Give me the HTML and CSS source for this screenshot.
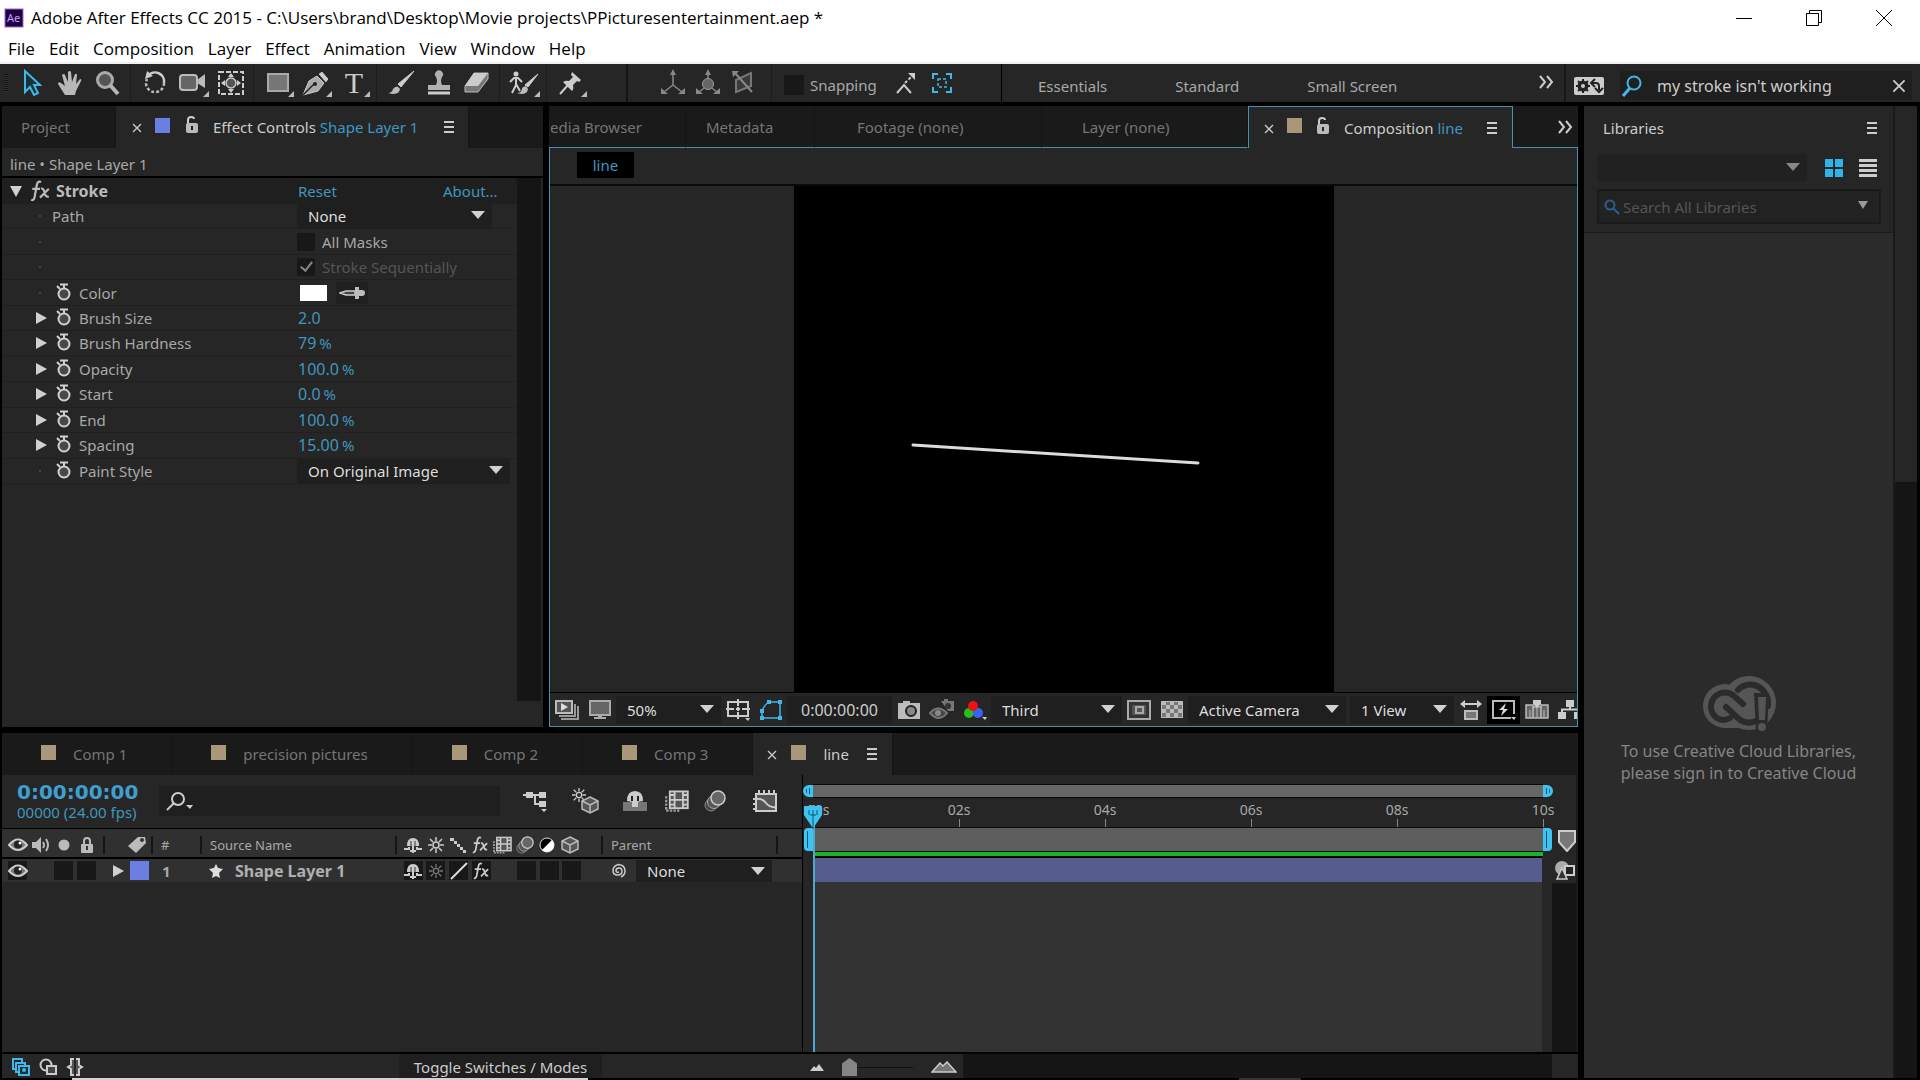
FILE: index.html
```html
<!DOCTYPE html>
<html lang="en">
<head>
  <meta charset="UTF-8">
  <meta name="viewport" content="width=device-width, initial-scale=1.0">
  <title>Adobe After Effects CC 2015</title>
  <link rel="stylesheet" href="styles.css">
</head>
<body>

  <!-- shared icons -->
  <svg class="sprite" aria-hidden="true">
    <symbol id="i-eye" viewBox="0 0 20 14"><path d="M1 7Q10-4 19 7Q10 17 1 7Z" fill="#777" stroke="#ccc" stroke-width="2"/><circle cx="10" cy="6.500" r="4" fill="#222"/><circle cx="12" cy="5" r="1.500" fill="#fff"/></symbol>
    <symbol id="i-lock-open" viewBox="0 0 14 18"><path d="M3 8V4q0-3 3-3q3 0 3 2" fill="none" stroke="#ccc" stroke-width="2"/><rect x="1" y="7" width="12" height="10" rx="2" fill="#bbb"/><path d="M7 10v4" stroke="#222" stroke-width="2"/></symbol>
    <symbol id="i-menu" viewBox="0 0 12 14"><path d="M1 2h10M1 7h10M1 12h10" stroke="#ccc" stroke-width="2"/></symbol>
    <symbol id="i-more" viewBox="0 0 16 14"><path d="M2 1l5 6-5 6M9 1l5 6-5 6" fill="none" stroke="#ccc" stroke-width="2"/></symbol>
    <symbol id="i-x" viewBox="0 0 10 10"><path d="M1 1l8 8M9 1l-8 8" stroke="currentColor" stroke-width="1.300"/></symbol>
    <symbol id="i-watch" viewBox="0 0 16 18"><circle cx="8" cy="11" r="5.500" fill="#484848" stroke="#d0d0d0" stroke-width="2"/><path d="M4 1.500h8M8 1v4M1 3l3 3" stroke="#d0d0d0" stroke-width="2"/></symbol>
    <symbol id="i-right" viewBox="0 0 11 12"><path d="M0 0l11 6-11 6z" fill="#d0d0d0"/></symbol>
    <symbol id="i-fx" viewBox="0 0 18 20"><path d="M10 2Q7 0 6 5L4 16Q3 19 1 18M2 8h7M10 8q2-1 3 3q1 5 4 4M17 8L9 16" fill="none" stroke="currentColor" stroke-width="2"/></symbol>
    <symbol id="i-shy" viewBox="0 0 18 16"><path d="M3 9Q3 1 9 1Q15 1 15 9Z" fill="#ccc"/><path d="M0 12h5v-2M18 12h-5v-2M9 5v11M6 14h6" fill="none" stroke="#ccc" stroke-width="2"/><path d="M7 4v5M11 4v5" stroke="#333"/></symbol>
    <symbol id="i-sun" viewBox="0 0 16 16"><circle cx="8" cy="8" r="3" fill="none" stroke="currentColor" stroke-width="1.500"/><path d="M8 0v4M8 12v4M0 8h4M12 8h4M2 2l3 3M11 11l3 3M14 2l-3 3M5 11l-3 3" stroke="currentColor" stroke-width="1.500"/></symbol>
    <symbol id="i-film" viewBox="0 0 20 18"><path d="M1 5v12h12" fill="none" stroke="#999" stroke-width="2" stroke-dasharray="2 1"/><rect x="4" y="1" width="15" height="14" fill="#555" stroke="#ccc" stroke-width="1.500"/><path d="M8 1v14M15 1v14M8 8h7M4 4h4M4 8h4M4 12h4M15 4h4M15 8h4M15 12h4" stroke="#ccc" stroke-width="1.500"/></symbol>
    <symbol id="i-blur" viewBox="0 0 22 22"><circle cx="7" cy="15" r="6" fill="#444" stroke="#888"/><circle cx="10" cy="12" r="6.500" fill="#555" stroke="#aaa"/><circle cx="14" cy="8" r="7" fill="#666" stroke="#ccc" stroke-width="1.500"/></symbol>
    <symbol id="i-cube" viewBox="0 0 18 18"><path d="M9 1l8 4v8l-8 4-8-4V5z" fill="#555" stroke="#bbb" stroke-width="1.500"/><path d="M1 5l8 4 8-4M9 9v8" fill="none" stroke="#bbb" stroke-width="1.500"/></symbol>
    <symbol id="i-tick" viewBox="0 0 6 6"><path d="M6 0v6H0z" fill="#bbb"/></symbol>
  </svg>

  <header class="titlebar">
    <svg class="ae-logo" width="20" height="20" viewBox="0 0 20 20"><rect x="1" y="1" width="18" height="18" fill="#1f0040" stroke="#9a6bd0"/><text x="3" y="14" font-size="11" font-family="Noto Sans" fill="#c9a0ff">Ae</text></svg>
    <h1>Adobe After Effects CC 2015 - C:\Users\brand\Desktop\Movie projects\PPicturesentertainment.aep *</h1>
    <div class="win-buttons">
      <button aria-label="Minimize"><svg width="16" height="16" viewBox="0 0 16 16"><path d="M0 8.500h16" stroke="#000"/></svg></button>
      <button aria-label="Restore"><svg width="16" height="16" viewBox="0 0 16 16"><path d="M.5 3.500h12v12H.500zM3.500 3.500v-3h12v12h-3" fill="none" stroke="#000"/></svg></button>
      <button aria-label="Close"><svg width="16" height="16" viewBox="0 0 16 16"><path d="M0 0l16 16M16 0L0 16" stroke="#000"/></svg></button>
    </div>
  </header>

  <nav class="menubar">
    <button>File</button><button>Edit</button><button>Composition</button><button>Layer</button><button>Effect</button><button>Animation</button><button>View</button><button>Window</button><button>Help</button>
  </nav>

  <div class="toolbar">
    <span class="grip"></span>
    <div class="tools">
      <button aria-label="Selection"><svg width="20" height="28" viewBox="0 0 20 28"><path d="M3 2v21l5-5 4 8 4-2-4-8h6z" fill="#1b3038" stroke="#3fb8e8" stroke-width="2"/></svg></button>
      <button aria-label="Hand"><svg width="26" height="26" viewBox="0 0 26 26"><path d="M8 25L1 14q0-3 3-1l4 3L5 5q2-2 3 0l3 7V2q2-2 3 0l1 10 3-8q2-1 2 1l-1 9 4-5q2 0 1 2l-5 10-1 4z" fill="#b8b8b8"/></svg></button>
      <button aria-label="Zoom"><svg width="26" height="26" viewBox="0 0 26 26"><circle cx="10" cy="10" r="7.500" fill="#555" stroke="#aaa" stroke-width="3"/><path d="M15 15l8 9" stroke="#b5b5b5" stroke-width="4"/></svg></button>
    </div>
    <div class="tools">
      <button aria-label="Rotation"><svg width="24" height="26" viewBox="0 0 24 26"><path d="M5 6a9 9 0 0 1 16 7" fill="none" stroke="#ccc" stroke-width="2.500"/><path d="M21 13a9 9 0 1 1-17-4" fill="none" stroke="#bbb" stroke-width="2.500" stroke-dasharray="3 2"/><path d="M2 9l2-8 6 5z" fill="#ccc"/></svg></button>
      <button aria-label="Camera"><svg width="28" height="22" viewBox="0 0 28 22"><rect x="1" y="3" width="17" height="15" rx="3" fill="#666" stroke="#bbb" stroke-width="2"/><path d="M18 8l8-6v14l-8-5z" fill="#bbb"/></svg><svg class="corner"><use href="#i-tick"/></svg></button>
      <button aria-label="Pan Behind"><svg width="26" height="24" viewBox="0 0 26 24"><rect x="1" y="1" width="24" height="22" fill="none" stroke="#ccc" stroke-width="2" stroke-dasharray="5 2"/><circle cx="13" cy="12" r="5" fill="#555" stroke="#ccc" stroke-width="1.500"/><path d="M13 2l3 4h-6zM13 22l3-4h-6zM3 12l4-3v6zM23 12l-4-3v6z" fill="#ccc"/></svg></button>
    </div>
    <div class="tools">
      <button aria-label="Rectangle"><svg width="22" height="22" viewBox="0 0 22 22"><rect x="1" y="2" width="20" height="17" fill="#777" stroke="#aaa" stroke-width="2"/></svg><svg class="corner"><use href="#i-tick"/></svg></button>
      <button aria-label="Pen"><svg width="28" height="26" viewBox="0 0 28 26"><path d="M1 25L7 11l8-5 7 7-6 8z" fill="#aaa" stroke="#ccc"/><path d="M1 25l11-11" stroke="#222" stroke-width="1.500"/><circle cx="13" cy="14" r="2" fill="#222"/><path d="M16 4l4-3 7 8-3 4z" fill="#ccc" stroke="#222"/></svg><svg class="corner"><use href="#i-tick"/></svg></button>
      <button class="type-tool" aria-label="Type">T<svg class="corner"><use href="#i-tick"/></svg></button>
    </div>
    <div class="tools">
      <button aria-label="Brush"><svg width="28" height="26" viewBox="0 0 28 26"><path d="M27 1L14 17l-3-3z" fill="#ccc" stroke="#ccc"/><path d="M1 23q4 0 5-4 4-5 7 0-1 7-12 4z" fill="#bbb"/></svg></button>
      <button aria-label="Clone Stamp"><svg width="24" height="26" viewBox="0 0 24 26"><path d="M9 15q2-4 0-8a4 4 0 1 1 6 0q-2 4 0 8h8v5H1v-5z" fill="#b0b0b0"/><path d="M1 23h22" stroke="#ccc" stroke-width="3"/></svg></button>
      <button aria-label="Eraser"><svg width="26" height="22" viewBox="0 0 26 22"><path d="M10 1h14v6l-10 13H1v-6z" fill="#777" stroke="#bbb"/><path d="M10 1h14L14 14H1z" fill="#ccc"/></svg></button>
    </div>
    <div class="tools">
      <button aria-label="Roto Brush"><svg width="30" height="26" viewBox="0 0 30 26"><circle cx="7" cy="4" r="2.500" fill="#ccc"/><path d="M1 12l4-4h4l4 4M7 8v7l-4 8M7 14l4 7" fill="none" stroke="#ccc" stroke-width="2"/><path d="M29 4L19 17l-3-2z" stroke="#ccc" fill="#ccc"/><path d="M8 23q5 0 5-5 4-4 6 1-1 7-11 4z" fill="#bbb"/></svg><svg class="corner"><use href="#i-tick"/></svg></button>
    </div>
    <div class="tools last">
      <button aria-label="Puppet Pin"><svg width="26" height="26" viewBox="0 0 26 26"><path d="M14 2l9 8-2 2-2-1-4 4q1 4-1 6L5 12q3-2 6-1l4-4-2-2z" fill="#ccc"/><path d="M10 15L2 24" stroke="#ccc" stroke-width="2"/></svg><svg class="corner"><use href="#i-tick"/></svg></button>
    </div>
    <div class="axis-tools">
      <button aria-label="Local Axis"><svg width="26" height="26" viewBox="0 0 26 26"><path d="M13 4v12l-9 7M13 16l9 7" fill="none" stroke="#888" stroke-width="1.500"/><path d="M13 0l3 6h-6zM1 19v6h7zM25 19v6h-7z" fill="#888"/></svg></button>
      <button aria-label="World Axis"><svg width="26" height="26" viewBox="0 0 26 26"><path d="M13 4v12l-9 7M13 16l9 7" fill="none" stroke="#888" stroke-width="1.500"/><circle cx="13" cy="15" r="5.500" fill="#666" stroke="#999"/><path d="M13 0l3 6h-6zM1 19v6h7zM25 19v6h-7z" fill="#888"/></svg></button>
      <button aria-label="View Axis"><svg width="26" height="26" viewBox="0 0 26 26"><path d="M6 11l15-7v13L6 23z" fill="#3a3a3a" stroke="#777" stroke-width="2"/><path d="M5 4l17 19" fill="none" stroke="#888" stroke-width="2"/><path d="M2 2h7l-6 6z" fill="#888"/></svg></button>
    </div>
    <div class="snapping">
      <input type="checkbox" id="snapping"><label for="snapping">Snapping</label>
      <button aria-label="Snap edges"><svg width="20" height="22" viewBox="0 0 20 22"><path d="M1 21l7-8 7 8" fill="none" stroke="#ccc" stroke-width="2"/><path d="M9 11l8-8" stroke="#ccc" stroke-width="2" stroke-dasharray="3 2"/><path d="M12 1h7v7z" fill="#ccc"/></svg></button>
      <button aria-label="Snap features"><svg width="20" height="20" viewBox="0 0 20 20"><path d="M1 6V1h5M14 1h5v5M19 14v5h-5M6 19H1v-5" fill="none" stroke="#3fb8e8" stroke-width="2"/><path d="M6 6h8v8H6z" fill="none" stroke="#3fb8e8" stroke-width="1.500" stroke-dasharray="3 2"/></svg></button>
    </div>
    <div class="workspaces">
      <button>Essentials</button><button>Standard</button><button>Small Screen</button>
      <button class="more" aria-label="More workspaces"><svg width="16" height="14"><use href="#i-more"/></svg></button>
    </div>
    <div class="help-search">
      <button aria-label="Sync settings"><svg width="30" height="18" viewBox="0 0 30 18"><rect width="30" height="18" rx="2" fill="#ccc"/><path d="M9 2v14M2 9h14M4 4l10 10M14 4L4 14" stroke="#222" stroke-width="2"/><circle cx="9" cy="9" r="4" fill="none" stroke="#222" stroke-width="3"/><circle cx="9" cy="9" r="2" fill="#ccc"/><path d="M18 6h4q3 0 3 3v4M21 2l-4 4 4 4M21 11l4 4 4-4" fill="none" stroke="#222" stroke-width="2"/></svg></button>
      <div class="search-field">
        <svg width="20" height="22" viewBox="0 0 20 22"><circle cx="12" cy="8" r="6.500" fill="none" stroke="#3fb8e8" stroke-width="2"/><path d="M8 13l-7 8" stroke="#3fb8e8" stroke-width="3"/></svg>
        <input type="text" value="my stroke isn't working" aria-label="Search Help">
        <button aria-label="Clear search"><svg width="14" height="14"><use href="#i-x"/></svg></button>
      </div>
    </div>
  </div>

  <main class="workspace">
    <div class="main-col">
      <div class="upper">

        <section class="panel effects">
          <div class="tabs">
            <button class="tab project">Project</button>
            <div class="tab active effect-tab">
              <button class="close" aria-label="Close"><svg width="10" height="10"><use href="#i-x"/></svg></button>
              <span class="swatch blue"></span>
              <svg width="14" height="18"><use href="#i-lock-open"/></svg>
              <span class="tab-name">Effect Controls <b>Shape Layer 1</b></span>
              <svg width="12" height="14"><use href="#i-menu"/></svg>
            </div>
          </div>
          <p class="crumb">line • Shape Layer 1</p>
          <div class="effect-body">
            <div class="effect-list">
              <div class="effect-head">
                <span class="down"></span>
                <svg class="fx" width="20" height="22"><use href="#i-fx"/></svg>
                <strong>Stroke</strong>
                <a href="#">Reset</a>
                <a href="#" class="about">About...</a>
              </div>
              <div class="props">
                <div class="prop"><i class="dot"></i><label class="plain" for="path">Path</label><span class="drop path-drop"><select id="path"><option>None</option></select></span></div>
                <div class="prop"><i class="dot"></i><span class="check"><input type="checkbox" id="masks"><label for="masks">All Masks</label></span></div>
                <div class="prop"><i class="dot"></i><span class="check"><input type="checkbox" id="seq" checked disabled><label for="seq">Stroke Sequentially</label></span></div>
                <div class="prop"><i class="dot"></i><svg class="watch"><use href="#i-watch"/></svg><span class="name">Color</span><span class="color-field"><button class="color-well" aria-label="Color"></button><button class="dropper" aria-label="Eyedropper"><svg width="26" height="12" viewBox="0 0 26 12"><path d="M1 6l6-2h9v4H7z" fill="#444" stroke="#ccc" stroke-width="1.500"/><path d="M16 0h4v3h3q3 0 3 3t-3 3h-3v3h-4z" fill="#bbb"/></svg></button></span></div>
                <div class="prop"><svg class="arrow"><use href="#i-right"/></svg><svg class="watch"><use href="#i-watch"/></svg><span class="name">Brush Size</span><button class="value">2.0</button></div>
                <div class="prop"><svg class="arrow"><use href="#i-right"/></svg><svg class="watch"><use href="#i-watch"/></svg><span class="name">Brush Hardness</span><button class="value">79<span>%</span></button></div>
                <div class="prop"><svg class="arrow"><use href="#i-right"/></svg><svg class="watch"><use href="#i-watch"/></svg><span class="name">Opacity</span><button class="value">100.0<span>%</span></button></div>
                <div class="prop"><svg class="arrow"><use href="#i-right"/></svg><svg class="watch"><use href="#i-watch"/></svg><span class="name">Start</span><button class="value">0.0<span>%</span></button></div>
                <div class="prop"><svg class="arrow"><use href="#i-right"/></svg><svg class="watch"><use href="#i-watch"/></svg><span class="name">End</span><button class="value">100.0<span>%</span></button></div>
                <div class="prop"><svg class="arrow"><use href="#i-right"/></svg><svg class="watch"><use href="#i-watch"/></svg><span class="name">Spacing</span><button class="value">15.00<span>%</span></button></div>
                <div class="prop"><i class="dot"></i><svg class="watch"><use href="#i-watch"/></svg><label class="name" for="paint">Paint Style</label><span class="drop paint-drop"><select id="paint"><option>On Original Image</option></select></span></div>
              </div>
            </div>
            <div class="scroll-track"></div>
          </div>
        </section>

        <section class="panel viewer">
          <div class="tabs">
            <button class="tab media">Media Browser</button>
            <button class="tab metadata">Metadata</button>
            <button class="tab footage">Footage (none)</button>
            <button class="tab layer-tab">Layer (none)</button>
            <div class="tab active comp-tab">
              <button class="close" aria-label="Close"><svg width="10" height="10"><use href="#i-x"/></svg></button>
              <span class="swatch"></span>
              <svg width="14" height="18"><use href="#i-lock-open"/></svg>
              <span class="tab-name">Composition <b>line</b></span>
              <svg width="12" height="14"><use href="#i-menu"/></svg>
            </div>
            <div class="tab-rest"><button aria-label="More tabs"><svg width="16" height="14"><use href="#i-more"/></svg></button></div>
          </div>
          <div class="viewer-body">
            <div class="comp-nav"><button>line</button></div>
            <div class="stage">
              <svg class="canvas" viewBox="0 0 540 506" preserveAspectRatio="xMidYMin slice"><rect width="540" height="506" fill="#000"/><path d="M119 259L404 277" stroke="#dcdcd8" stroke-width="3" stroke-linecap="round"/></svg>
            </div>
            <div class="view-bar">
              <button class="ic" aria-label="Always preview"><svg width="24" height="22" viewBox="0 0 24 22"><path d="M6 20h17V7M4 17h16V5" fill="none" stroke="#999" stroke-width="2"/><rect x="1" y="2" width="16" height="12" fill="#555" stroke="#bbb" stroke-width="2"/><path d="M6 4l7 4-7 4z" fill="#ddd"/></svg></button>
              <button class="ic" aria-label="Main viewer"><svg width="22" height="20" viewBox="0 0 22 20"><rect x="1" y="1" width="20" height="14" fill="#666" stroke="#aaa" stroke-width="2"/><path d="M9 15h4v2h4v2H5v-2h4z" fill="#aaa"/></svg></button>
              <span class="drop zoom-drop"><select aria-label="Magnification"><option>50%</option></select></span>
              <button class="ic" aria-label="Guides"><svg width="24" height="22" viewBox="0 0 24 22"><rect x="2" y="3" width="20" height="14" fill="none" stroke="#ccc" stroke-width="2"/><path d="M12 0v7M12 13v7M0 10h8M16 10h8M10 10h4M12 8v4" stroke="#ccc" stroke-width="2"/><path d="M19 19h5l-2 3z" fill="#ccc"/></svg></button>
              <button class="ic" aria-label="Mask visibility"><svg width="24" height="22" viewBox="0 0 24 22"><path d="M3 19V13Q4 7 10 3H21V19Z" fill="none" stroke="#3fb8e8" stroke-width="1.500"/><path d="M1 17h4v4H1zM19 17h4v4h-4zM19 1h4v4h-4zM8 1h4v4H8zM1 10h4v4H1z" fill="#3fb8e8"/></svg></button>
              <button class="time-box">0:00:00:00</button>
              <button class="ic" aria-label="Snapshot"><svg width="24" height="20" viewBox="0 0 24 20"><path d="M1 3h5V1h7v2h10v16H1z" fill="#bbb"/><circle cx="14" cy="11" r="5" fill="#888" stroke="#222" stroke-width="2"/></svg></button>
              <button class="ic" aria-label="Show snapshot"><svg width="26" height="24" viewBox="0 0 26 24"><path d="M1 15q8-9 17 0q-8 10-17 0z" fill="#444" stroke="#777" stroke-width="2"/><circle cx="9" cy="15" r="3" fill="#888"/><path d="M12 3h3V1h4v2h6v10h-6" fill="#777"/><circle cx="19" cy="8" r="3" fill="#333"/></svg></button>
              <button class="ic" aria-label="Channels"><svg width="24" height="20" viewBox="0 0 24 20"><circle cx="6" cy="13" r="5" fill="#1fc01f"/><circle cx="15" cy="13" r="5" fill="#3b62f5"/><circle cx="10" cy="6" r="5" fill="#f01010"/><path d="M19 17h5l-2 3z" fill="#ccc"/></svg></button>
              <span class="drop res-drop"><select aria-label="Resolution"><option>Third</option></select></span>
              <button class="ic" aria-label="Region of interest"><svg width="24" height="20" viewBox="0 0 24 20"><rect x="1" y="1" width="22" height="18" fill="#333" stroke="#aaa" stroke-width="2"/><path d="M5 5h14v10H5z" fill="#555"/><rect x="9" y="7" width="7" height="6" fill="#555" stroke="#aaa" stroke-width="2"/></svg></button>
              <button class="ic" aria-label="Transparency grid"><svg width="24" height="20" viewBox="0 0 24 20"><rect x="1" y="1" width="22" height="17" fill="#bbb"/><path d="M2 5h4v4H2zM6 2h4v3H6zM14 2h4v3h-4zM10 5h4v4h-4zM18 5h4v4h-4zM6 9h4v4H6zM14 9h4v4h-4zM2 13h4v4H2zM10 13h4v4h-4zM18 13h4v4h-4z" fill="#777"/></svg></button>
              <span class="drop cam-drop"><select aria-label="3D view"><option>Active Camera</option></select></span>
              <span class="drop view-drop"><select aria-label="View layout"><option>1 View</option></select></span>
              <button class="ic" aria-label="Pixel aspect"><svg width="22" height="20" viewBox="0 0 22 20"><path d="M4 4h14" stroke="#ccc" stroke-width="2"/><path d="M5 0v8L0 4zM17 0v8l5-4z" fill="#ccc"/><rect x="5" y="11" width="12" height="8" fill="#777" stroke="#bbb" stroke-width="2"/></svg></button>
              <button class="ic on" aria-label="Fast previews"><svg width="24" height="20" viewBox="0 0 24 20"><path d="M19 18H1V1h21v13" fill="none" stroke="#bbb" stroke-width="2"/><path d="M14 3l-7 7h4l-2 6 7-7h-4z" fill="#ddd"/><path d="M19 17h5l-2 3z" fill="#ccc"/></svg></button>
              <button class="ic" aria-label="Timeline"><svg width="24" height="20" viewBox="0 0 24 20"><path d="M1 5h7v13H1zM16 5h7v13h-7zM8 7h8v11H8z" fill="#666" stroke="#bbb" stroke-width="1.500"/><path d="M12 8v10M5 10v8M19 10v8" stroke="#bbb"/><path d="M8 0h8v4l-4 4-4-4z" fill="#ccc"/></svg></button>
              <button class="ic" aria-label="Flowchart"><svg width="24" height="20" viewBox="0 0 24 20"><path d="M8 0h8v7H8zM0 12h8v7H0zM16 12h8v7h-8z" fill="#ccc"/><path d="M12 7v3M4 13V9.500h16V13" fill="none" stroke="#ccc" stroke-width="2"/></svg></button>
            </div>
          </div>
        </section>
      </div>

      <section class="panel timeline">
        <div class="tabs">
          <button class="tab comp"><span class="swatch"></span>Comp 1</button>
          <button class="tab comp"><span class="swatch"></span>precision pictures</button>
          <button class="tab comp"><span class="swatch"></span>Comp 2</button>
          <button class="tab comp"><span class="swatch"></span>Comp 3</button>
          <div class="tab active line-tab">
            <button class="close" aria-label="Close"><svg width="10" height="10"><use href="#i-x"/></svg></button>
            <span class="swatch"></span>
            <span class="tab-name">line</span>
            <svg width="12" height="14"><use href="#i-menu"/></svg>
          </div>
        </div>

        <div class="timeline-body">
          <div class="layers">
            <div class="layers-head">
              <button class="timecode">0:00:00:00<small>00000 (24.00 fps)</small></button>
              <label class="layer-search">
                <svg width="28" height="20" viewBox="0 0 28 20"><circle cx="12" cy="8" r="6" fill="none" stroke="#ccc" stroke-width="2"/><path d="M8 12l-7 7" stroke="#ccc" stroke-width="2"/><path d="M20 14h7l-3 4z" fill="#ccc"/></svg>
                <input type="text" aria-label="Search layers">
              </label>
              <div class="layer-tools">
                <button aria-label="Mini flowchart"><svg width="26" height="22" viewBox="0 0 26 22"><path d="M1 5h20M13 5v9h5" fill="none" stroke="#ccc" stroke-width="2"/><path d="M4 2h7v6H4zM17 2h7v6h-7zM17 11h7v6h-7zM19 19h6l-3 3z" fill="#ccc"/></svg></button>
                <button aria-label="Draft 3D"><svg width="28" height="26" viewBox="0 0 28 26"><svg width="14" height="14" color="#ccc"><use href="#i-sun"/></svg><svg x="9" y="8" width="18" height="18"><use href="#i-cube"/></svg></svg></button>
                <button aria-label="Hide shy layers"><svg width="26" height="22" viewBox="0 0 26 22"><path d="M1 12h24v9H1z" fill="#777"/><path d="M5 11Q5 1 13 1Q21 1 21 11L16 12V17H10V12z" fill="#ccc"/><path d="M10 6v5M16 6v5" stroke="#222" stroke-width="2"/></svg></button>
                <button aria-label="Frame blending"><svg width="24" height="22"><use href="#i-film"/></svg></button>
                <button aria-label="Motion blur"><svg width="22" height="22"><use href="#i-blur"/></svg></button>
                <button aria-label="Graph editor"><svg width="24" height="22" viewBox="0 0 24 22"><rect x="3" y="4" width="20" height="17" fill="#555" stroke="#ccc" stroke-width="2"/><path d="M3 9q6-1 10 4t10 4" fill="none" stroke="#ccc" stroke-width="2"/><path d="M6 0v4M11 0v4M16 0v4M21 0v4M0 9h3M0 14h3M0 19h3" stroke="#ccc" stroke-width="2"/></svg></button>
              </div>
            </div>
            <table class="layer-table">
              <colgroup><col class="c-av"><col class="c-label"><col class="c-num"><col class="c-name"><col class="c-switches"><col class="c-parent"><col></colgroup>
              <thead>
                <tr>
                  <th><div class="cell av"><svg width="20" height="14"><use href="#i-eye"/></svg><svg width="18" height="16" viewBox="0 0 18 16"><path d="M0 5h4l5-5v16l-5-5H0z" fill="#bbb"/><path d="M11 5q2 3 0 6M14 2q4 6 0 12" fill="none" stroke="#bbb" stroke-width="2"/></svg><svg width="12" height="12" viewBox="0 0 12 12"><circle cx="6" cy="6" r="5.500" fill="#bbb"/></svg><svg width="12" height="16" viewBox="0 0 12 16"><path d="M3 8V4q0-3 3-3t3 3v4" fill="none" stroke="#bbb" stroke-width="2"/><rect y="7" width="12" height="9" rx="1" fill="#bbb"/><path d="M6 9v4" stroke="#333" stroke-width="2"/></svg></div></th>
                  <th><div class="cell end"><svg width="20" height="18" viewBox="0 0 20 18"><path d="M1 10L11 1h7l1 6-10 10z" fill="#bbb"/><circle cx="15" cy="4" r="2" fill="#333"/></svg></div></th>
                  <th><div class="cell num">#</div></th>
                  <th><div class="cell">Source Name</div></th>
                  <th><div class="cell switches"><svg width="18" height="16"><use href="#i-shy"/></svg><svg width="16" height="16"><use href="#i-sun"/></svg><svg width="16" height="16" viewBox="0 0 16 16"><path d="M0 1h4v3H0zM4 4h3v3H4zM7 7h3v3H7zM10 10h3v3h-3zM13 13h3v3h-3z" fill="#ccc"/></svg><svg width="16" height="18"><use href="#i-fx"/></svg><svg width="19" height="18"><use href="#i-film"/></svg><svg width="18" height="18"><use href="#i-blur"/></svg><svg width="16" height="16" viewBox="0 0 16 16"><circle cx="8" cy="8" r="7" fill="#000" stroke="#ddd"/><path d="M13 3A7 7 0 0 1 3 13z" fill="#fff"/></svg><svg width="18" height="18"><use href="#i-cube"/></svg></div></th>
                  <th><div class="cell">Parent</div></th>
                  <th></th>
                </tr>
              </thead>
              <tbody>
                <tr>
                  <td><div class="row av"><span class="box"><svg width="20" height="14"><use href="#i-eye"/></svg></span><span></span><span class="box"></span><span class="box"></span></div></td>
                  <td><div class="row label"><svg class="arrow"><use href="#i-right"/></svg><span class="layer-color"></span></div></td>
                  <td class="index">1</td>
                  <td><div class="row source"><svg width="14" height="14" viewBox="0 0 14 14"><path d="M7 0l2 4 5 1-4 4 1 5-4-2-4 2 1-5-4-4 5-1z" fill="#ddd"/></svg>Shape Layer 1</div></td>
                  <td><div class="row switches"><span class="box"><svg width="18" height="16"><use href="#i-shy"/></svg></span><span class="box dim"><svg width="14" height="14"><use href="#i-sun"/></svg></span><span class="box"><svg width="18" height="18" viewBox="0 0 18 18"><path d="M1 17L17 1" stroke="#ddd" stroke-width="2"/></svg></span><span class="box"><svg width="16" height="18"><use href="#i-fx"/></svg></span><span></span><span class="box"></span><span class="box"></span><span class="box"></span></div></td>
                  <td><div class="row parent"><svg width="16" height="16" viewBox="0 0 16 16"><path d="M9 9Q6 10 6 7.500T9 5q3 0 3 3.500T7.500 12Q3 12 3 7.500T8.500 1.500Q15 2 15 8q0 4-4 6" fill="none" stroke="#ccc" stroke-width="1.500"/></svg><span class="drop parent-drop"><select aria-label="Parent"><option>None</option></select></span></div></td>
                  <td></td>
                </tr>
              </tbody>
            </table>
          </div>

          <div class="time-pane">
            <div class="tracks">
              <div class="nav-bar"><span class="handle left"></span><span class="handle right"></span></div>
              <div class="ruler">
                <span class="mark first">:00s</span><span class="mark">02s</span><span class="mark">04s</span><span class="mark">06s</span><span class="mark">08s</span><span class="mark">10s</span>
              </div>
              <div class="work-bar"><span class="handle left"></span><span class="handle right"></span></div>
              <div class="cache"></div>
              <div class="track-area"><div class="layer-bar"></div></div>
              <div class="playhead"><svg width="20" height="24" viewBox="0 0 20 24"><path d="M1 1h18v9l-8 12h-2L1 10z" fill="#3fc3f3"/><path d="M6 5v5M10 5v19M14 5v5M7 10h6" stroke="#15506b"/></svg></div>
            </div>
            <div class="time-side">
              <svg class="marker" width="18" height="22" viewBox="0 0 18 22"><path d="M1 1h16v11l-8 9-8-9z" fill="#777" stroke="#ccc" stroke-width="2"/></svg>
              <svg class="comp-button" width="22" height="20" viewBox="0 0 22 20"><circle cx="8" cy="8" r="7" fill="#aaa"/><rect x="11" y="6" width="9" height="9" fill="#222" stroke="#ccc" stroke-width="2"/><path d="M8 8l5 11H3z" fill="#333" stroke="#ccc" stroke-width="1.500"/></svg>
              <div class="scroll-track"></div>
            </div>
          </div>
        </div>

        <div class="timeline-foot">
          <div class="pane-toggles">
            <button aria-label="Layer switches"><svg width="18" height="18" viewBox="0 0 18 18"><path d="M4 11H1V1h9v3M7 14H4V5h9v3" fill="none" stroke="#3fb8e8" stroke-width="2"/><rect x="7" y="8" width="10" height="9" fill="#1b3038" stroke="#3fb8e8" stroke-width="2"/><circle cx="12" cy="12" r="2" fill="#3fb8e8"/></svg></button>
            <button aria-label="Transfer controls"><svg width="18" height="18" viewBox="0 0 18 18"><circle cx="7" cy="7" r="5.500" fill="none" stroke="#ccc" stroke-width="2"/><rect x="8" y="8" width="9" height="8" fill="#444" stroke="#ccc" stroke-width="2"/></svg></button>
            <button aria-label="In and out"><svg width="18" height="18" viewBox="0 0 18 18"><path d="M8 1H5v6l-3 2 3 2v6h3M10 1h3v6l3 2-3 2v6h-3" fill="#555" stroke="#ccc" stroke-width="2"/></svg></button>
          </div>
          <button class="toggle-modes">Toggle Switches / Modes</button>
          <div class="zoom-slider">
            <svg width="14" height="8" viewBox="0 0 14 8"><path d="M0 8l4-5 2 2 3-4 5 7z" fill="#ccc"/></svg>
            <input type="range" min="0" max="100" value="0" aria-label="Timeline zoom">
            <svg width="26" height="12" viewBox="0 0 26 12"><path d="M1 11l8-9 3 3 4-4 9 10z" fill="#777" stroke="#ccc" stroke-width="1.500"/></svg>
          </div>
          <div class="scroll-track"></div>
        </div>
      </section>
    </div>

    <aside class="panel libraries">
      <div class="lib-main">
        <div class="lib-head"><h2>Libraries</h2><svg width="12" height="14"><use href="#i-menu"/></svg></div>
        <div class="lib-row">
          <span class="drop lib-drop"><select aria-label="Library"><option></option></select></span>
          <button aria-label="Grid view"><svg width="18" height="18" viewBox="0 0 18 18"><path d="M0 0h8v8H0zM10 0h8v8h-8zM0 10h8v8H0zM10 10h8v8h-8z" fill="#2fb4ea"/></svg></button>
          <button aria-label="List view"><svg width="18" height="18" viewBox="0 0 18 18"><path d="M0 1.500h18M0 6.500h18M0 11.500h18M0 16.500h18" stroke="#ccc" stroke-width="3"/></svg></button>
        </div>
        <div class="lib-search">
          <svg width="16" height="16" viewBox="0 0 16 16"><circle cx="6" cy="6" r="4.500" fill="none" stroke="#2d5d8f" stroke-width="2"/><path d="M9 9l6 6" stroke="#2d5d8f" stroke-width="2"/></svg>
          <input type="text" placeholder="Search All Libraries" aria-label="Search All Libraries">
          <button aria-label="Search scope"></button>
        </div>
        <div class="lib-empty">
          <!-- cloud outline with the linked rings cut out, and the warning mark -->
          <svg width="74" height="56" viewBox="0 0 74 56"><circle cx="47" cy="27" r="27" fill="#555"/><circle cx="23" cy="30" r="22" fill="#555"/><path d="M23 40h28v12H23z" fill="#555"/><path d="M41 28L31 19A13 13 0 1 0 15 42Q21 46 28 42M36 14Q43 7 52 9A19 19 0 0 1 66 30M24 31L37 43Q44 49 54 45" fill="none" stroke="#2b2b2b" stroke-width="6" stroke-linecap="round"/><path d="M52 17h15l-2 39H54z" fill="#2b2b2b"/><path d="M56 21h8l-1 23h-6z" fill="#555"/><circle cx="60" cy="51" r="4" fill="#555"/></svg>
          <p>To use Creative Cloud Libraries,<br>please sign in to Creative Cloud</p>
        </div>
      </div>
      <div class="lib-scroll"><div class="thumb"></div></div>
    </aside>
  </main>

  <footer class="taskbar-edge"><span class="light"></span><span class="grey"></span></footer>

</body>
</html>
```

FILE: styles.css
```css
* {
  box-sizing: border-box;
}
body {
  margin: 0;
  height: 100vh;
  display: grid;
  grid-template-rows: 32px 32px 38px minmax(0, 1fr) 2px;
  background: #000;
  color: #a8a8a8;
  font-family: "Noto Sans", Tahoma, sans-serif;
  font-size: 15px;
  line-height: 20px;
  overflow: hidden;
}
.sprite {
  position: absolute;
  width: 0;
  height: 0;
}
svg {
  display: block;
  flex: none;
}
button {
  padding: 0;
  border: none;
  background: none;
  color: inherit;
  font: inherit;
  white-space: nowrap;
}
input, select {
  font: inherit;
  color: inherit;
  border: none;
  border-radius: 0;
  margin: 0;
  padding: 0;
  background: none;
  min-width: 0;
}
a {
  color: #4295bd;
  text-decoration: none;
}
h1, h2, p {
  margin: 0;
  font-size: inherit;
  font-weight: normal;
}

/* title and menu */
.titlebar {
  display: flex;
  align-items: center;
  gap: 7px;
  padding: 3px 9px 0 4px;
  background: #fff;
  color: #000;
  font-family: "Open Sans", "Segoe UI", sans-serif;
  font-size: 17px;
  white-space: nowrap;
}
.win-buttons {
  display: flex;
  gap: 16px;
  margin-left: auto;
}
.win-buttons button {
  display: grid;
  place-items: center;
  width: 54px;
}
.menubar {
  display: flex;
  align-items: center;
  gap: 14px;
  padding: 4px 8px 0;
  background: #fff;
  border-bottom: 2px solid #f0f0f0;
  color: #000;
  font-family: "Open Sans", "Segoe UI", sans-serif;
  font-size: 17px;
}

/* toolbar */
.toolbar {
  display: flex;
  background: #262626;
}
.toolbar button {
  display: grid;
  place-items: center;
  position: relative;
}
.grip {
  width: 4px;
  margin: 10px 0 10px 4px;
  background: repeating-linear-gradient(#111 0 1px, #333 1px 2px);
}
.tools {
  display: flex;
  padding: 0 3px 0 5px;
  border-right: 1px solid #1c1c1c;
}
.tools.last {
  width: 81px;
  border-right: 2px solid #151515;
}
.tools button {
  width: 38px;
}
.tools .corner {
  position: absolute;
  right: 3px;
  bottom: 5px;
  width: 6px;
  height: 6px;
}
.tools .type-tool {
  font-family: "Liberation Serif", serif;
  font-size: 30px;
  color: #ccc;
}
.axis-tools {
  display: flex;
  width: 144px;
  padding: 0 0 2px 27px;
  border-right: 1px solid #1c1c1c;
}
.axis-tools button {
  width: 35px;
}
.snapping {
  display: flex;
  align-items: center;
  width: 230px;
  padding: 4px 0 0 12px;
  border-right: 1px solid #000;
}
.snapping label {
  width: 92px;
  padding-left: 6px;
}
.snapping button {
  width: 36px;
  justify-items: start;
  padding-bottom: 4px;
}
input[type="checkbox"] {
  appearance: none;
  flex: none;
  display: grid;
  place-items: center;
  width: 18px;
  height: 18px;
  background: #181818;
}
.snapping input[type="checkbox"] {
  width: 20px;
  height: 20px;
}
input[type="checkbox"]:checked::after {
  content: "";
  width: 5px;
  height: 10px;
  margin-bottom: 4px;
  border: solid #888;
  border-width: 0 2px 2px 0;
  transform: rotate(38deg);
}
.workspaces {
  flex: 1;
  display: flex;
  align-items: center;
  gap: 68px;
  padding: 5px 10px 0 36px;
  border-right: 2px solid #181818;
}
.workspaces .more {
  margin: 0 0 7px auto;
}
.help-search {
  display: flex;
  align-items: center;
  gap: 16px;
  padding: 5px 8px 0 8px;
}
.search-field {
  display: flex;
  align-items: center;
  width: 292px;
  height: 29px;
  padding: 0 6px 0 2px;
  background: #1f1f1f;
  color: #ccc;
  font-size: 16px;
}
.search-field input {
  flex: 1;
  padding-left: 15px;
}

/* panels */
.workspace {
  display: grid;
  grid-template-columns: minmax(0, 1fr) 333px;
  gap: 6px;
  padding: 4px 3px 0 2px;
  min-height: 0;
}
.main-col {
  display: grid;
  grid-template-rows: minmax(0, 9fr) minmax(0, 5fr);
  gap: 6px;
  min-height: 0;
  min-width: 0;
}
.upper {
  display: grid;
  grid-template-columns: 541px minmax(0, 1fr);
  gap: 6px;
  min-height: 0;
}
.panel {
  display: flex;
  flex-direction: column;
  min-width: 0;
  min-height: 0;
  background: #262626;
}
.tabs {
  display: flex;
  flex: none;
  height: 42px;
  background: #1a1a1a;
  color: #757575;
}
.tab {
  display: flex;
  align-items: center;
  flex: none;
  border-right: 1px solid #151515;
  white-space: nowrap;
}
.tab.active {
  background: #262626;
  color: #ccc;
}
.tab b {
  font-weight: normal;
  color: #3f97c4;
}
.tab .close {
  color: #ccc;
  padding-top: 2px;
}
.tab .swatch, .tab .swatch + svg {
  margin-bottom: 4px;
}
.swatch {
  flex: none;
  width: 15px;
  height: 15px;
  background: #a8977a;
}
.swatch.blue {
  background: #6b7fe3;
}
.scroll-track {
  background: #151515;
}

/* custom drop-downs */
.drop {
  position: relative;
  display: flex;
  height: 24px;
  background: #1f1f1f;
  color: #ddd;
}
.drop select {
  appearance: none;
  width: 100%;
  padding-left: 11px;
}
.drop::after {
  content: "";
  position: absolute;
  right: 7px;
  top: 7px;
  border: 7px solid transparent;
  border-top: 8px solid #d0d0d0;
  border-bottom: none;
  pointer-events: none;
}

/* effect controls */
.tab.project {
  width: 114px;
  padding-left: 19px;
}
.effect-tab {
  width: 353px;
  padding-left: 16px;
}
.effect-tab .swatch {
  margin: 0 15px 4px 13px;
}
.effect-tab .tab-name {
  width: 244px;
  padding-left: 14px;
}
.crumb {
  flex: none;
  height: 30px;
  padding: 6px 8px 0;
  border-bottom: 2px solid #000;
}
.effect-body {
  flex: 1;
  display: grid;
  grid-template-columns: minmax(0, 1fr) 24px;
  padding-right: 2px;
  padding-bottom: 26px;
}
.effect-head {
  display: grid;
  grid-template-columns: 20px 26px 242px 145px 1fr;
  align-items: center;
  height: 26px;
  padding-left: 8px;
  background: #1f1f1f;
  color: #bbb;
}
.effect-head strong {
  font-size: 16px;
}
.fx {
  color: #bbb;
}
.down {
  width: 0;
  border: 6px solid transparent;
  border-top: 11px solid #d0d0d0;
  border-bottom: none;
}
.props {
  display: grid;
  grid-auto-rows: 1fr;
  height: 280px;
}
.prop {
  display: grid;
  grid-template-columns: 34px 20px 23px 218px 1fr;
  align-items: center;
  border-bottom: 1px solid #202020;
}
.dot {
  justify-self: end;
  width: 2px;
  height: 2px;
  margin-right: -5px;
  background: #444;
}
.arrow {
  width: 11px;
  height: 12px;
}
.prop .arrow {
  justify-self: end;
  margin-right: -11px;
}
.prop .watch {
  grid-column: 3;
  width: 16px;
  height: 18px;
  margin-bottom: 2px;
}
.prop .name {
  grid-column: 4;
}
.prop .plain {
  grid-column: 2 / 5;
  padding-left: 16px;
}
.prop .value {
  grid-column: 5;
  justify-self: start;
  padding-left: 1px;
  font-size: 16px;
  color: #4295bd;
}
.value span {
  margin-left: 3px;
  font-size: 15px;
}
.check {
  grid-column: 5;
  display: flex;
  align-items: center;
  gap: 7px;
}
.check input:disabled + label {
  color: #555;
}
.prop .drop {
  grid-column: 5;
}
.path-drop {
  width: 195px;
}
.paint-drop {
  width: 213px;
}
.color-field {
  grid-column: 5;
  display: flex;
  align-items: center;
  gap: 9px;
  padding-left: 3px;
}
.color-well {
  width: 27px;
  height: 16px;
  background: #fff;
}
.dropper {
  padding: 5px 3px;
  background: #202020;
}

/* composition viewer */
.viewer .tab, .tab-rest {
  border-bottom: 1px solid #4a8fb0;
}
.tab.media {
  width: 137px;
  justify-content: flex-end;
  padding-right: 43px;
  overflow: hidden;
}
.tab.metadata {
  width: 129px;
  padding-left: 20px;
}
.tab.footage {
  width: 227px;
  padding-left: 42px;
}
.tab.layer-tab {
  width: 206px;
  padding-left: 40px;
}
.viewer .comp-tab {
  width: 265px;
  padding-left: 15px;
  border: 1px solid #4a8fb0;
  border-bottom: none;
}
.comp-tab .swatch {
  margin: 0 14px 4px 13px;
}
.comp-tab .tab-name {
  width: 156px;
  padding-left: 14px;
}
.tab-rest {
  flex: 1;
  display: flex;
  justify-content: flex-end;
  padding-right: 5px;
}
.viewer-body {
  flex: 1;
  display: flex;
  flex-direction: column;
  min-height: 0;
  border: 1px solid #4a8fb0;
  border-top: none;
}
.comp-nav {
  flex: none;
  height: 38px;
  padding: 4px 27px;
  border-bottom: 2px solid #0a0a0a;
}
.comp-nav button {
  width: 57px;
  height: 26px;
  background: #000;
  color: #3f97c4;
}
.stage {
  flex: 1;
  display: flex;
  justify-content: center;
  min-height: 0;
}
.canvas {
  width: 540px;
  height: 100%;
}
.view-bar {
  flex: none;
  display: flex;
  align-items: center;
  height: 34px;
  padding-top: 1px;
  border-top: 1px solid #000;
  color: #ccc;
  overflow: hidden;
}
.view-bar .ic {
  display: grid;
  place-items: center;
  flex: none;
  width: 33px;
  height: 28px;
}
.view-bar .on {
  background: #000;
}
.view-bar .drop, .time-box {
  flex: none;
  height: 28px;
  background: #1f1f1f;
}
.view-bar .drop::after {
  top: 9px;
}
.view-bar .time-box {
  font-size: 16px;
}
.zoom-drop, .time-box {
  width: 105px;
}
.res-drop {
  width: 131px;
}
.cam-drop {
  width: 158px;
  margin-right: 4px;
}
.view-drop {
  width: 104px;
}

/* timeline */
.tab.comp {
  padding: 0 44px 0 39px;
}
.tab.comp .swatch {
  margin-right: 17px;
}
.line-tab {
  width: 140px;
  padding-left: 14px;
}
.line-tab .swatch {
  margin: 0 17px 4px 14px;
}
.line-tab .tab-name {
  width: 43px;
}
.timeline-body {
  flex: 1;
  display: grid;
  grid-template-columns: 800px minmax(0, 1fr);
  min-height: 0;
}
.layers-head {
  display: flex;
  align-items: flex-start;
  height: 54px;
  border-bottom: 1px solid #000;
}
.timecode {
  width: 157px;
  padding: 7px 0 0 15px;
  text-align: left;
  font-family: "DejaVu Sans", Verdana, sans-serif;
  font-size: 20px;
  font-weight: bold;
  color: #3f9fd0;
}
.timecode small {
  display: block;
  font-family: "Noto Sans", Tahoma, sans-serif;
  font-size: 15px;
  font-weight: normal;
  color: #4295bd;
}
.layer-search {
  display: flex;
  align-items: center;
  width: 341px;
  height: 30px;
  margin: 11px 7px 0 0;
  padding-left: 7px;
  background: #1f1f1f;
}
.layer-search input {
  flex: 1;
}
.layer-tools {
  display: grid;
  grid-template-columns: 50px 50px 43px 39px 49px 46px;
  align-items: center;
  height: 48px;
  margin: 2px 0 0 15px;
}
.layer-table {
  width: 100%;
  table-layout: fixed;
  border-collapse: collapse;
  background: #303030;
}
.c-av {
  width: 103px;
}
.c-label {
  width: 48px;
}
.c-num {
  width: 49px;
}
.c-name {
  width: 195px;
}
.c-switches {
  width: 206px;
}
.c-parent {
  width: 175px;
}
.layer-table th, .layer-table td {
  padding: 0;
  text-align: left;
  color: #ccc;
}
.layer-table th {
  height: 29px;
  padding-top: 3px;
  font-size: 13px;
  font-weight: normal;
  color: #a8a8a8;
  border-bottom: 2px solid #000;
}
.cell {
  display: flex;
  align-items: center;
  height: 18px;
  padding-left: 8px;
  border-right: 2px solid #151515;
}
.cell.end {
  justify-content: flex-end;
  padding-right: 4px;
}
.layer-table td {
  height: 24px;
}
.layer-table .index {
  padding-left: 9px;
  font-weight: bold;
  color: #a8a8a8;
}
.row {
  display: grid;
  align-items: center;
}
.av {
  display: grid;
  grid-template-columns: repeat(4, 23px);
  justify-items: center;
  padding-left: 4px;
}
.switches {
  display: grid;
  grid-template-columns: repeat(8, minmax(0, 1fr));
  justify-items: center;
  padding: 0 20px 0 5px;
  color: #ccc;
}
.box {
  display: grid;
  place-items: center;
  width: 19px;
  height: 19px;
  background: #181818;
}
.dim {
  color: #777;
}
.row.label {
  grid-template-columns: 17px 20px;
  padding-left: 8px;
}
.layer-color {
  width: 19px;
  height: 19px;
  background: #6b7fe3;
}
.row.source {
  grid-template-columns: 26px 1fr;
  padding-left: 7px;
  font-size: 16px;
  font-weight: bold;
  color: #b0b0b0;
}
.row.parent {
  grid-template-columns: 26px 136px;
  padding-left: 7px;
}
.parent-drop {
  height: 22px;
}
.time-pane {
  display: grid;
  grid-template-columns: minmax(0, 1fr) 26px;
  border-left: 1px solid #000;
}
.tracks {
  position: relative;
  display: flex;
  flex-direction: column;
  padding: 9px 9px 0 10px;
}
.nav-bar, .work-bar {
  position: relative;
  flex: none;
  height: 14px;
  background: #666;
  border: solid #0a0a0a;
  border-width: 1px 0;
}
.work-bar {
  height: 25px;
  background: #5e5e5e;
}
.handle {
  position: absolute;
  top: 0;
  bottom: 0;
  width: 10px;
  border: 3px solid #3fc3f3;
  background: repeating-linear-gradient(90deg, #15506b 0 1px, #3fc3f3 1px 3px);
}
.work-bar .handle {
  width: 9px;
}
.handle.left {
  right: 100%;
  border-radius: 8px 0 0 8px;
}
.handle.right {
  left: 100%;
  border-radius: 0 8px 8px 0;
}
.work-bar .handle.left {
  border-radius: 4px 0 0 4px;
}
.work-bar .handle.right {
  border-radius: 0 4px 4px 0;
}
.ruler {
  flex: none;
  display: flex;
  justify-content: space-between;
  height: 29px;
  font-size: 14px;
}
.mark {
  position: relative;
  display: flex;
  justify-content: center;
  width: 0;
  height: 29px;
  padding-top: 2px;
}
.mark::after {
  content: "";
  position: absolute;
  bottom: 0;
  width: 1px;
  height: 8px;
  background: #888;
}
.mark.first {
  justify-content: flex-start;
  margin: 0 10px 0 -10px;
}
.mark.first::after {
  display: none;
}
.cache {
  flex: none;
  height: 4px;
  background: #18b52a;
}
.track-area {
  flex: 1;
  margin-right: 1px;
  border-top: 2px solid #000;
  background: #333;
}
.layer-bar {
  height: 24px;
  background: #555d8f;
}
.playhead {
  position: absolute;
  left: 0;
  top: 30px;
  bottom: 0;
  width: 20px;
  background: linear-gradient(#4fa8d0, #4fa8d0) 10px 0 / 2px 100% no-repeat;
}
.time-side {
  display: flex;
  flex-direction: column;
  padding-top: 55px;
  border-right: 2px solid #1c1c1c;
}
.time-side .marker {
  margin: 0 0 8px 6px;
}
.time-side .comp-button {
  margin-left: 2px;
}
.time-side .scroll-track {
  flex: 1;
  margin-top: 3px;
}
.timeline-foot {
  flex: none;
  display: grid;
  grid-template-columns: 397px 203px 361px minmax(0, 1fr) 26px;
  height: 26px;
  border-top: 2px solid #000;
}
.pane-toggles {
  display: flex;
  align-items: center;
  gap: 9px;
  padding: 2px 0 0 10px;
}
.toggle-modes {
  padding-top: 2px;
  background: #1f1f1f;
  color: #ccc;
}
.zoom-slider {
  display: flex;
  align-items: center;
  padding: 2px 0 0 208px;
}
.zoom-slider input {
  appearance: none;
  width: 71px;
  height: 18px;
  margin: 0 18px;
  background: linear-gradient(#111, #111) 0 50% / 100% 1px no-repeat;
}
.zoom-slider input::-webkit-slider-thumb {
  appearance: none;
  width: 15px;
  height: 18px;
  background: #858585;
  clip-path: polygon(50% 0, 100% 30%, 100% 100%, 0 100%, 0 30%);
}

/* libraries */
.libraries {
  flex-direction: row;
}
.lib-main {
  flex: 1;
  display: flex;
  flex-direction: column;
  border-right: 2px solid #1a1a1a;
}
.lib-head {
  display: flex;
  justify-content: space-between;
  align-items: center;
  height: 43px;
  padding: 0 15px 0 19px;
  color: #ccc;
}
.lib-row {
  display: flex;
  align-items: center;
  gap: 16px;
  padding: 5px 16px 8px 13px;
}
.lib-drop {
  flex: 1;
  height: 27px;
  background: #212121;
  margin-right: 2px;
}
.lib-drop::after {
  top: 9px;
  border-top-color: #888;
}
.lib-search {
  display: flex;
  align-items: center;
  height: 35px;
  margin: 0 12px 8px 13px;
  padding-left: 5px;
  border: 2px solid #1a1a1a;
  background: #222;
}
.lib-search input {
  flex: 1;
  padding-left: 3px;
}
.lib-search input::placeholder {
  color: #555;
}
.lib-search button {
  margin: 0 11px 4px 0;
  border: 5px solid transparent;
  border-top: 8px solid #999;
  border-bottom: none;
}
.lib-empty {
  flex: 1;
  display: flex;
  flex-direction: column;
  justify-content: center;
  align-items: center;
  gap: 8px;
  padding-top: 148px;
  border-top: 1px solid #1a1a1a;
  background: #2b2b2b;
  text-align: center;
  font-size: 16px;
  line-height: 22px;
  color: #858585;
}
.lib-scroll {
  width: 22px;
  background: #151515;
}
.lib-scroll .thumb {
  height: 376px;
  background: #262626;
}

.taskbar-edge {
  display: flex;
}
.taskbar-edge .light {
  width: 516px;
  margin: 0 651px 0 72px;
  background: #d8d0d4;
}
.taskbar-edge .grey {
  width: 62px;
  background: #333;
}
```
